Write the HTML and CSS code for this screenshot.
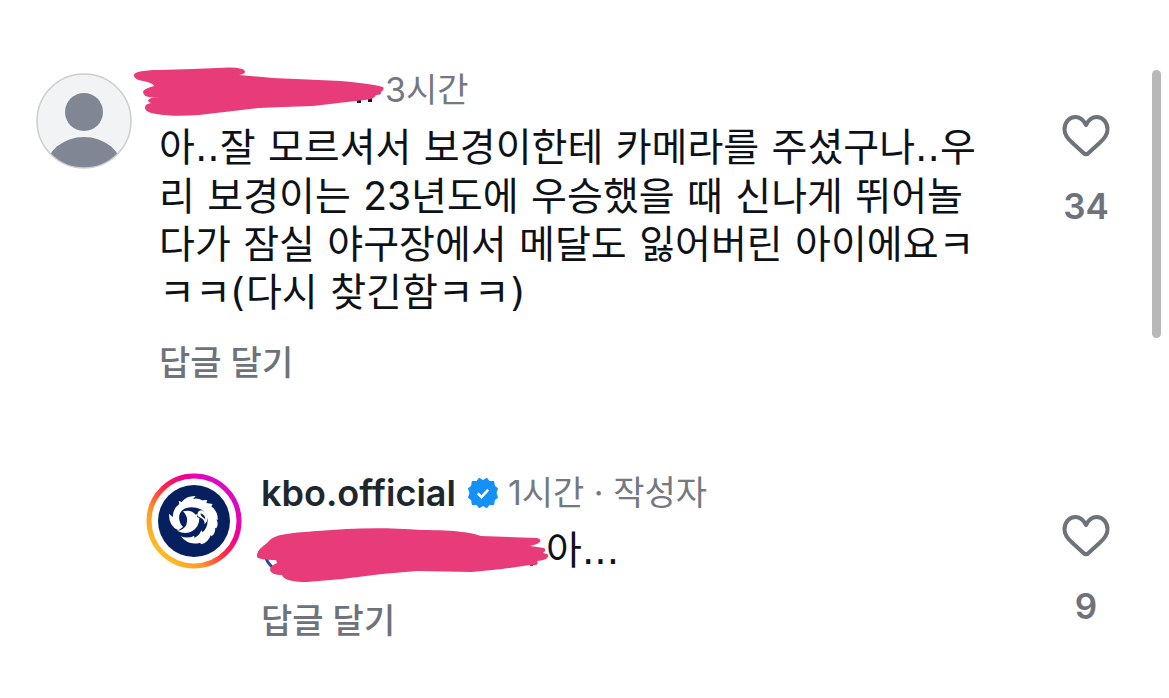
FILE: index.html
```
<!DOCTYPE html>
<html lang="ko">
<head>
<meta charset="utf-8">
<meta name="viewport" content="width=device-width, initial-scale=1">
<title>댓글</title>
<link rel="stylesheet" href="styles.css">
</head>
<body>
<main class="comments">
  <article class="comment">
    <svg class="avatar" viewBox="0 0 96 96" aria-hidden="true">
      <defs><clipPath id="face"><circle cx="48" cy="48" r="47"/></clipPath></defs>
      <circle cx="48" cy="48" r="47" fill="#f1f3f5"/>
      <g clip-path="url(#face)" fill="#808693">
        <circle cx="48" cy="39" r="19"/>
        <ellipse cx="48" cy="96" rx="38" ry="32"/>
      </g>
      <circle cx="48" cy="48" r="47" fill="none" stroke="#ccced0" stroke-width="1.5"/>
    </svg>
    <div class="body">
      <header class="meta">
        <span class="hidden-name">
          <svg class="stroke stroke-name" viewBox="0 0 252 52" aria-hidden="true">
            <path d="M224 36h4v-4h-4zM235 35h4v-5h-4z" fill="#171b20"/>
            <path d="M1 9C-1 6 8 3 26 3L60 2 84 1Q112-1 112 5 112 7 106 8L140 11 208 14Q240 17 250 20 252 22 248 25 249 28 243 28 242 32 232 33L214 35 180 39 150 40 126 41 100 44 66 48Q40 50 23 47 11 45 12 40 12 37 18 36 12 34 18 31L27 30Q10 32 10 25 10 22 21 19 20 16 10 14 2 13 1 9Z" fill="#e73b7a"/>
          </svg>
        </span>
        <time>3시간</time>
      </header>
      <p class="text">아..잘 모르셔서 보경이한테 카메라를 주셨구나..우<br>리 보경이는 <span class="digits">23</span>년도에 우승했을 때 신나게 뛰어놀<br>다가 잠실 야구장에서 메달도 잃어버린 아이에요ㅋ<br>ㅋㅋ(다시 찾긴함ㅋㅋ)</p>
      <button class="answer" type="button">답글 달기</button>
    </div>
    <button class="like" type="button" aria-label="좋아요 34">
      <svg class="heart" viewBox="0 0 48 44" aria-hidden="true"><path d="M24 11C21 5 17 3 13.500 3 7 3 2.500 8.500 2.500 15.500 2.500 21 6 25 10 28.500L21.500 39Q24 41.500 26.500 39L38 28.500C42 25 45.500 21 45.500 15.500 45.500 8.500 41 3 34.500 3 31 3 27 5 24 11Z"/></svg>
      <span>34</span>
    </button>
  </article>

  <article class="comment nested">
    <svg class="avatar" viewBox="0 0 96 96" aria-hidden="true">
      <defs>
        <linearGradient id="ring" x1="0.15" y1="0.85" x2="0.85" y2="0.2">
          <stop offset="0" stop-color="#fdbb22"/><stop offset=".22" stop-color="#ff9827"/><stop offset=".52" stop-color="#ff2545"/><stop offset=".76" stop-color="#f4008d"/><stop offset="1" stop-color="#dc08c5"/>
        </linearGradient>
      </defs>
      <circle cx="48" cy="48" r="45" fill="#fff" stroke="url(#ring)" stroke-width="5"/>
      <circle cx="48" cy="48" r="36" fill="#06205f"/>
      <g transform="translate(17 16) scale(.3333)" fill="#fff">
        <path d="M46 124Q17 112 18 74L29 84Q30 58 49 45L47 36 56 39Q70 20 98 21L90 30Q103 25 118 34L133 33 130 42 149 45 145 52Q166 68 164 94L160 91Q168 106 160 118L157 116Q157 134 145 142L144 137Q135 162 114 166L112 161Q77 171 53 142 75 150 94 140L94 147Q109 140 115 124L119 130Q134 116 134 94 132 64 100 56 61 50 50 75 44 97 60 114Z"/>
        <path d="M42 125Q62 124 70 108 78 84 60 67 84 60 98 77L104 74 102 84 109 87Q109 113 88 126 68 138 42 125Z"/>
        <path fill="none" stroke="#06205f" stroke-width="7" d="M100 67Q122 82 116 104 111 123 93 134 74 144 44 134"/>
        <path fill-rule="evenodd" d="M104 81Q101 66 115 64 129 68 133 84 134 98 125 106 125 91 114 87 108 84 104 81ZM113 73Q111 80 118 84 124 86 127 92 127 77 113 73Z"/>
      </g>
    </svg>
    <div class="body">
      <header class="meta">
        <a class="name" href="#kbo.official">kbo.official</a>
        <svg class="badge" viewBox="0 0 40 40" role="img" aria-label="인증됨">
          <path fill="#1590f7" stroke="#1590f7" stroke-width="2" stroke-linejoin="round" d="M20 4l5-3 3 4 6 0 1 6 4 3-2 6 2 6-4 3-1 6-6 0-3 4-5-3-5 3-3-4-6 0-1-6-4-3 2-6-2-6 4-3 1-6 6 0 3-4z"/>
          <path d="M13 20.500l5 5 9-10" fill="none" stroke="#fff" stroke-width="3.500"/>
        </svg>
        <span>1시간 · 작성자</span>
      </header>
      <p class="text">
        <span class="hidden-mention">
          <svg class="stroke stroke-mention" viewBox="0 0 292 54" aria-hidden="true">
            <path d="M12 16Q3 27 15 39" fill="none" stroke="#3443a5" stroke-width="3"/>
            <path d="M273 38h3v-3h-3z" fill="#3443a5"/>
            <path d="M0 29C-1 22 7 18 11 14 18 5 38 5 60 3 95 0 125-1 165 2 200 2 216 5 224 8L280 10Q287 12 280 16L273 18 287 20Q290 22 286 25 294 26 290 30 289 32 280 33 283 38 273 37L245 41 215 44 160 43 125 46 85 51 50 54Q27 54 25 47 14 47 13 42 13 38 20 35L19 32Q2 32 0 29Z" fill="#e73b7a"/>
          </svg>
        </span>아...
      </p>
      <button class="answer" type="button">답글 달기</button>
    </div>
    <button class="like" type="button" aria-label="좋아요 9">
      <svg class="heart" viewBox="0 0 48 44" aria-hidden="true"><path d="M24 11C21 5 17 3 13.500 3 7 3 2.500 8.500 2.500 15.500 2.500 21 6 25 10 28.500L21.500 39Q24 41.500 26.500 39L38 28.500C42 25 45.500 21 45.500 15.500 45.500 8.500 41 3 34.500 3 31 3 27 5 24 11Z"/></svg>
      <span>9</span>
    </button>
  </article>
</main>
<div class="scroll-thumb"></div>
</body>
</html>
```
FILE: styles.css
```
* { box-sizing: border-box; }
body {
  margin: 0;
  background: #fff;
  color: #0e1217;
  font-family: Inter, "Noto Sans CJK KR", sans-serif;
}
button {
  padding: 0;
  border: 0;
  background: none;
  color: #6d727b;
  font: inherit;
  cursor: pointer;
}
.comments {
  display: flex;
  flex-direction: column;
  gap: 82px;
  padding: 66px 59px 40px 36px;
}
.comment {
  display: flex;
  align-items: flex-start;
}
.avatar {
  flex: none;
  width: 96px;
  height: 96px;
  margin: 7px 27px 0 0;
}
.body { flex: 1; min-width: 0; }
.meta {
  display: flex;
  align-items: center;
  height: 48px;
  color: #737881;
  font-size: 34px;
  line-height: 48px;
  white-space: nowrap;
}
.text {
  margin: 10px 0 22px;
  font-family: "DejaVu Sans", "Noto Sans CJK KR", sans-serif;
  font-size: 39px;
  line-height: 48px;
  white-space: nowrap;
}
.digits { font-family: Inter, sans-serif; }
.answer {
  display: block;
  font-size: 34px;
  font-weight: 500;
  line-height: 48px;
}
.like {
  display: flex;
  flex: none;
  flex-direction: column;
  align-items: center;
  gap: 26px;
  width: 48px;
  margin-top: 48px;
  font-size: 35px;
  font-weight: 600;
  line-height: 44px;
}
.heart {
  width: 48px;
  height: 44px;
  fill: none;
  stroke: #6d727b;
  stroke-width: 4;
  stroke-linejoin: round;
}
.nested { padding-left: 110px; }
.nested .avatar { margin: 4px 19px 0 0; }
.nested .like { margin-top: 45px; }
.name {
  color: #20262d;
  font-size: 36px;
  font-weight: 600;
  text-decoration: none;
}
.badge {
  width: 30px;
  height: 30px;
  margin: 0 10px 0 12px;
}
.hidden-name,
.hidden-mention {
  position: relative;
  display: inline-block;
  height: 48px;
}
.hidden-name { width: 226px; }
.hidden-mention {
  width: 285px;
  vertical-align: top;
}
.stroke {
  position: absolute;
  display: block;
}
.stroke-name {
  top: 1px;
  left: -26px;
  width: 252px;
  height: 52px;
}
.stroke-mention {
  top: 1px;
  left: -4px;
  width: 292px;
  height: 54px;
}
.scroll-thumb {
  position: fixed;
  top: 70px;
  right: 8px;
  width: 9px;
  height: 268px;
  border-radius: 5px;
  background: #b8b8b8;
}
```
